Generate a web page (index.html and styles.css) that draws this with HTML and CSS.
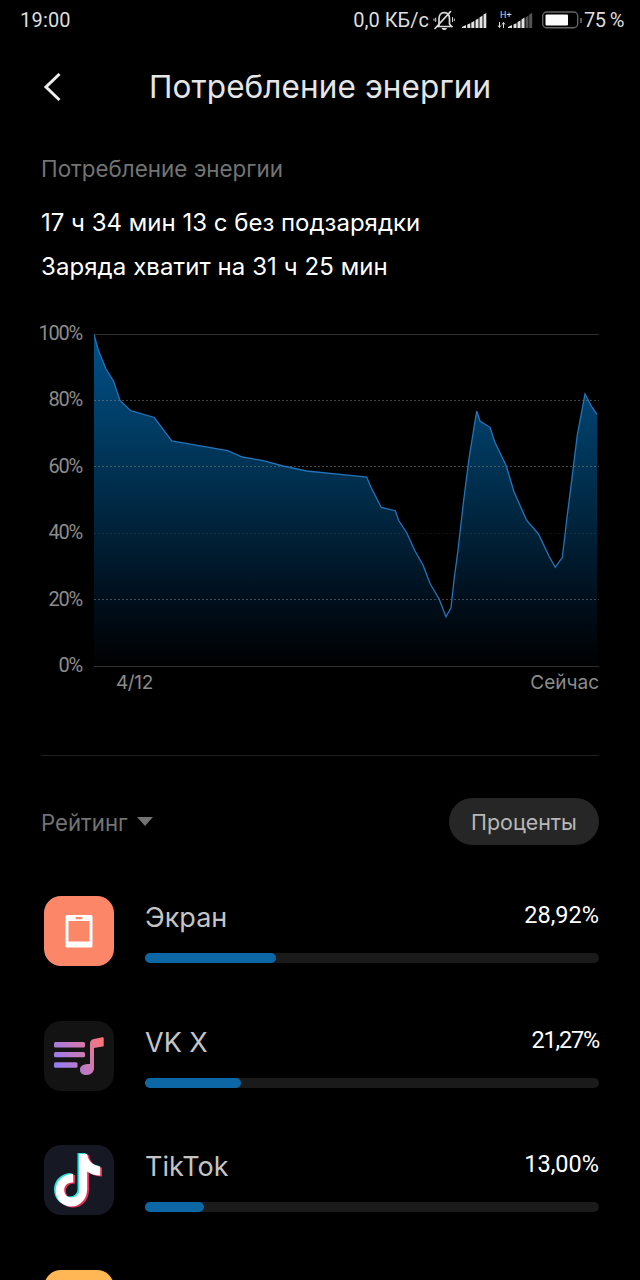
FILE: index.html
```html
<!DOCTYPE html>
<html lang="ru">
<head>
  <meta charset="UTF-8" />
  <meta name="viewport" content="width=device-width, initial-scale=1" />
  <title>Потребление энергии</title>
  <link rel="stylesheet" href="styles.css">
</head>
<body>

<!-- Status bar -->
<div class="status-bar">
  <span class="clock">19:00</span>
  <div class="status-right">
    <span class="net-speed">0,0 КБ/с</span>
    <svg class="status-icons" width="152" height="24" viewBox="0 0 152 24">
      <!-- muted bell -->
      <g fill="none" stroke="#ddd" stroke-width="1.7" stroke-linecap="round">
        <path d="M9.500 18.500h14.500M11 17.500V11c0-4 2-6.300 5.200-6.300s5.300 2.300 5.300 6.300v5l2 2.500"/>
        <path d="M7 20.500 22.500 3.700"/>
        <path d="M7.700 10v3.500M24.500 9.500v4M6 11v1.500M26.300 11v1.500" stroke-width="1"/>
      </g>
      <path d="M13.500 20h5.500c-.5 1.500-1.500 2-2.700 2s-2.300-.6-2.800-2z" fill="#ddd"/>
      <!-- sim 1 -->
      <path fill="#e6e6e6" d="M34 20v-1l4-2v3zM39.300 16.500l3-1.300V20h-3zM43.300 14.500l3-1.500v7h-3zM47.500 12l3-1.500V20h-3zM51.500 9.500l3-2V20h-3zM55.500 6.500l2.800-1.500v15h-2.800z"/>
      <!-- sim 2 -->
      <path fill="#e6e6e6" d="M80 20v-1l4-2v3zM85.500 16.500l3-1.300V20h-3zM89.500 14l3-1.500V20h-3zM93.500 11.500l3-2V20h-3z"/>
      <path fill="#555" d="M97.500 9.500l3-2V20h-3zM101.200 6.500l3-1.500v15h-3z"/>
      <path d="M71.500 14v5.300M70 17.500l1.500 2 1.500-2M75.500 20v-5.300M74 16.500l1.500-2 1.500 2" fill="none" stroke="#ddd" stroke-width="1"/>
      <text x="72" y="9.500" class="net-type">H+</text>
      <!-- battery -->
      <rect x="114.700" y="4" width="35" height="15.800" rx="4" fill="none" stroke="#666" stroke-width="1.400"/>
      <rect x="117.500" y="6.500" width="22.500" height="11" rx="1" fill="#fff"/>
    </svg>
    <span class="battery-cap"></span>
    <span class="battery-text">75 %</span>
  </div>
</div>

<!-- Header -->
<div class="header">
  <svg class="back" width="20" height="30" viewBox="0 0 20 30">
    <path d="M17.500 1 4 14l13.500 13" fill="none" stroke="#eee" stroke-width="3"/>
  </svg>
  <h1 class="title">Потребление энергии</h1>
</div>

<div class="summary">
  <h2 class="section-title">Потребление энергии</h2>
  <p class="line line-used">17 ч 34 мин 13 с без подзарядки</p>
  <p class="line line-left">Заряда хватит на 31 ч 25 мин</p>
</div>

<!-- Chart -->
<div class="chart">
  <div class="y-axis">
    <span>100%</span><span>80%</span><span>60%</span><span>40%</span><span>20%</span><span>0%</span>
  </div>
  <div class="plot">
    <svg width="505" height="334" viewBox="94 333 505 334">
      <defs>
        <linearGradient id="fill" x1="0" y1="334" x2="0" y2="667" gradientUnits="userSpaceOnUse">
          <stop offset="0" stop-color="#00508a"/>
          <stop offset=".2" stop-color="#00426f"/>
          <stop offset=".5" stop-color="#002a46"/>
          <stop offset=".8" stop-color="#000f1c"/>
          <stop offset="1" stop-color="#000000"/>
        </linearGradient>
      </defs>
      <path fill="url(#fill)" d="M94 334.500 98.300 350 106 369 113.500 381 120 400.500 130.700 410.700 154.300 417.500 171.700 441 227.700 450.700 242.300 457 263.300 460.700 283 466 306.700 471 350 475.300 366.700 477 370.700 486.700 381.300 507.500 395.300 510.700 398.700 520.500 406.700 532.700 415 551 423 565 430.300 584 439 598.700 446 616.700 451 607.700 454 580 458 550 463.700 500 469.300 456.700 476.700 411 480 421 490 427.300 494.700 441.700 506.300 466 514 491.700 526.700 520.500 538.300 533.700 549.300 556.700 555.300 567.300 562.300 557.300 567.300 515 570.300 491.700 577.300 435 585 394 591.700 406.700 597 414.300V666H94z"/>
      <path class="grid-dash" d="M94 400.500h505M94 466.500h505M94 599.500h505"/>
      <path class="grid-dash faint" d="M94 533.500h505"/>
      <path class="grid-solid" d="M94 334.500h505M94 666.500h505"/>
      <path class="level" d="M94 334.500 98.300 350 106 369 113.500 381 120 400.500 130.700 410.700 154.300 417.500 171.700 441 227.700 450.700 242.300 457 263.300 460.700 283 466 306.700 471 350 475.300 366.700 477 370.700 486.700 381.300 507.500 395.300 510.700 398.700 520.500 406.700 532.700 415 551 423 565 430.300 584 439 598.700 446 616.700 451 607.700 454 580 458 550 463.700 500 469.300 456.700 476.700 411 480 421 490 427.300 494.700 441.700 506.300 466 514 491.700 526.700 520.500 538.300 533.700 549.300 556.700 555.300 567.300 562.300 557.300 567.300 515 570.300 491.700 577.300 435 585 394 591.700 406.700 597 414.300"/>
    </svg>
    <div class="x-axis"><span class="date">4/12</span><span class="now">Сейчас</span></div>
  </div>
</div>

<!-- Rating -->
<div class="rating-bar">
  <div class="rating">
    <span class="rating-label">Рейтинг</span>
    <svg width="16" height="9" viewBox="0 0 16 9"><path d="M0 0h16L8 9z" fill="#737373"/></svg>
  </div>
  <button class="mode-btn">Проценты</button>
</div>

<div class="app-list">
  <div class="app">
    <svg class="app-icon" width="70" height="70" viewBox="0 0 70 70">
      <rect width="70" height="70" rx="17" fill="#fc8668"/>
      <path fill="#fff" fill-rule="evenodd" d="M23 19h24a1.500 1.500 0 0 1 1.500 1.500v29.500a1.500 1.500 0 0 1-1.500 1.500H23a1.500 1.500 0 0 1-1.500-1.500V20.500A1.500 1.500 0 0 1 23 19zM24.500 25v20.500h21V25z"/>
      <rect x="31.500" y="21" width="7" height="2.300" rx="1" fill="#fc8668"/>
    </svg>
    <div class="app-body">
      <div class="app-row"><span class="app-name">Экран</span><span class="app-percent">28,92%</span></div>
      <div class="track"><div class="bar" style="width: 28.92%"></div></div>
    </div>
  </div>

  <div class="app">
    <svg class="app-icon" width="70" height="70" viewBox="0 0 70 70">
      <defs>
        <linearGradient id="vk" x1="10" y1="50" x2="60" y2="20" gradientUnits="userSpaceOnUse">
          <stop offset="0" stop-color="#8b7dfa"/>
          <stop offset=".55" stop-color="#c97ab8"/>
          <stop offset="1" stop-color="#ff7474"/>
        </linearGradient>
      </defs>
      <rect width="70" height="70" rx="17" fill="#131313"/>
      <g fill="url(#vk)">
        <rect x="10" y="21" width="31" height="5.500" rx="1.500"/>
        <rect x="10" y="31" width="31" height="5.300" rx="1.500"/>
        <rect x="10" y="41.300" width="23.500" height="5.500" rx="1.500"/>
        <path d="M46 43V22.500c0-2.500 1.500-4 4-4.500l8.500-1.700c.8-.1 1.200.2 1.200 1v7.200c0 .7-.3 1-1 1.100L50 27v20c0 4-3 7-7.300 7-4 0-6.700-2-6.700-5.300 0-4 3.500-5.700 10-5.700z"/>
      </g>
    </svg>
    <div class="app-body">
      <div class="app-row"><span class="app-name">VK X</span><span class="app-percent narrow">21,27%</span></div>
      <div class="track"><div class="bar" style="width: 21.1%"></div></div>
    </div>
  </div>

  <div class="app">
    <svg class="app-icon" width="70" height="70" viewBox="0 0 70 70">
      <defs>
        <path id="note" d="M33.500 8h8c.7 6.500 5 11.500 13 12.500v9c-5 0-9.500-1.500-13-4v17.500C41.500 53 34.500 60.500 25.500 60.500S10 53.500 10 44.500c0-9.500 7.500-16.500 17.500-16.500v8.500c-5-.5-9 2.500-9 7.500 0 4.500 3 7.500 7.300 7.500 4.500 0 7.700-3 7.700-7.700z"/>
      </defs>
      <rect width="70" height="70" rx="17" fill="#161823"/>
      <use href="#note" fill="#25e5dc"/>
      <use href="#note" x="3.500" y="2" fill="#e83358"/>
      <use href="#note" x="1.700" y="1" fill="#fff"/>
    </svg>
    <div class="app-body">
      <div class="app-row"><span class="app-name">TikTok</span><span class="app-percent">13,00%</span></div>
      <div class="track"><div class="bar" style="width: 13%"></div></div>
    </div>
  </div>

  <div class="app">
    <svg class="app-icon" width="70" height="70" viewBox="0 0 70 70">
      <rect width="70" height="70" rx="17" fill="#ffb655"/>
    </svg>
    <div class="app-body">
      <div class="app-row"><span class="app-name"></span><span class="app-percent">7,88%</span></div>
    </div>
  </div>
</div>

</body>
</html>
```

FILE: styles.css
```css
* {
  margin: 0; padding: 0; box-sizing: border-box;
}
html {
  background: #000;
  overflow: hidden;
}
body {
  font-family: Inter, Roboto, sans-serif;
  background: #000;
  color: #fff;
  width: 640px;
  height: 1280px;
  overflow: hidden;
}
span, p, h1, h2 {
  white-space: nowrap;
}
.status-bar {
  display: flex;
  justify-content: space-between;
  align-items: center;
  height: 40px;
  padding: 0 16px 0 20px;
  font-family: Roboto, sans-serif;
  font-size: 20px;
  color: #dedede;
}
.clock {
  letter-spacing: .2px;
}
.status-right {
  display: flex;
  align-items: center;
}
.status-icons {
  display: block;
  margin-left: -2px;
  opacity: .99;
}
.net-speed {
  margin-right: 1px;
}
.net-type {
  font-size: 9px;
  fill: #ddd;
}
.battery-cap {
  width: 2px;
  height: 5px;
  background: #555;
  margin-right: 2px;
}
.battery-text {
  letter-spacing: -.5px;
}
.header {
  display: flex;
  align-items: center;
  height: 96px;
  padding-left: 42px;
}
.title {
  margin-left: 87px;
  font-size: 31.500px;
  line-height: 38px;
  margin-bottom: 2px;
  font-weight: 400;
  letter-spacing: .1px;
  color: #e6e6e6;
}
.summary {
  padding-left: 41px;
}
.section-title {
  margin-top: 16px;
  font-size: 22.400px;
  line-height: 34px;
  font-weight: 400;
  color: #737373;
}
.line {
  font-size: 24px;
  line-height: 44px;
  font-weight: 400;
}
.line-used {
  margin-top: 15px;
}
.line-left {
  letter-spacing: .08px;
}
.chart {
  display: flex;
  justify-content: flex-end;
  gap: 11px;
  height: 375px;
  margin-top: 44px;
  padding-right: 41px;
}
.y-axis {
  display: flex;
  flex-direction: column;
  align-items: flex-end;
  margin-top: -12px;
  padding-right: 1px;
  font-family: Roboto, sans-serif;
  font-size: 20px;
  line-height: 24px;
  letter-spacing: -1.200px;
  color: #8c8c8c;
}
.y-axis span {
  margin-bottom: 42.400px;
}
.plot {
  width: 505px;
}
.plot svg {
  display: block;
}
.grid-dash {
  stroke: #888;
  stroke-opacity: .5;
  stroke-dasharray: 2 2;
}
.grid-dash.faint {
  stroke-opacity: .15;
}
.grid-solid {
  stroke: #303030;
}
.level {
  fill: none;
  stroke: #2474b8;
  stroke-width: 1.300;
}
.x-axis {
  display: flex;
  justify-content: space-between;
  padding-left: 22px;
  font-size: 19px;
  line-height: 31px;
  color: #8c8c8c;
}
.date {
  letter-spacing: -.4px;
}
.rating-bar {
  display: flex;
  justify-content: space-between;
  align-items: center;
  margin: 47px 41px 0;
  padding-top: 42px;
  border-top: 1px solid #1f1f1f;
}
.rating {
  display: flex;
  align-items: center;
  gap: 9px;
  padding-top: 1px;
  font-size: 22.200px;
  color: #737373;
}
.rating svg {
  margin-bottom: 1px;
}
.mode-btn {
  width: 150px;
  height: 47px;
  border: none;
  border-radius: 24px;
  background: #262626;
  color: #b8b8b8;
  font-family: inherit;
  font-size: 21.400px;
}
.app-list {
  padding: 51px 41px 0 44px;
}
.app {
  display: flex;
  gap: 31px;
  height: 124.500px;
}
.app-icon {
  flex: none;
}
.app-body {
  flex: 1;
}
.app-row {
  display: flex;
  justify-content: space-between;
  height: 57px;
}
.app-name {
  font-size: 27px;
  line-height: 44px;
  font-weight: 400;
  color: #c4c4c4;
}
.app-percent {
  font-family: Roboto, sans-serif;
  font-size: 23.500px;
  line-height: 38px;
}
.app-percent.narrow {
  letter-spacing: -1.200px;
}
.track {
  height: 10px;
  border-radius: 5px;
  background: #1a1a1a;
}
.bar {
  height: 10px;
  border-radius: 5px;
  background: #0d67a5;
}
```
